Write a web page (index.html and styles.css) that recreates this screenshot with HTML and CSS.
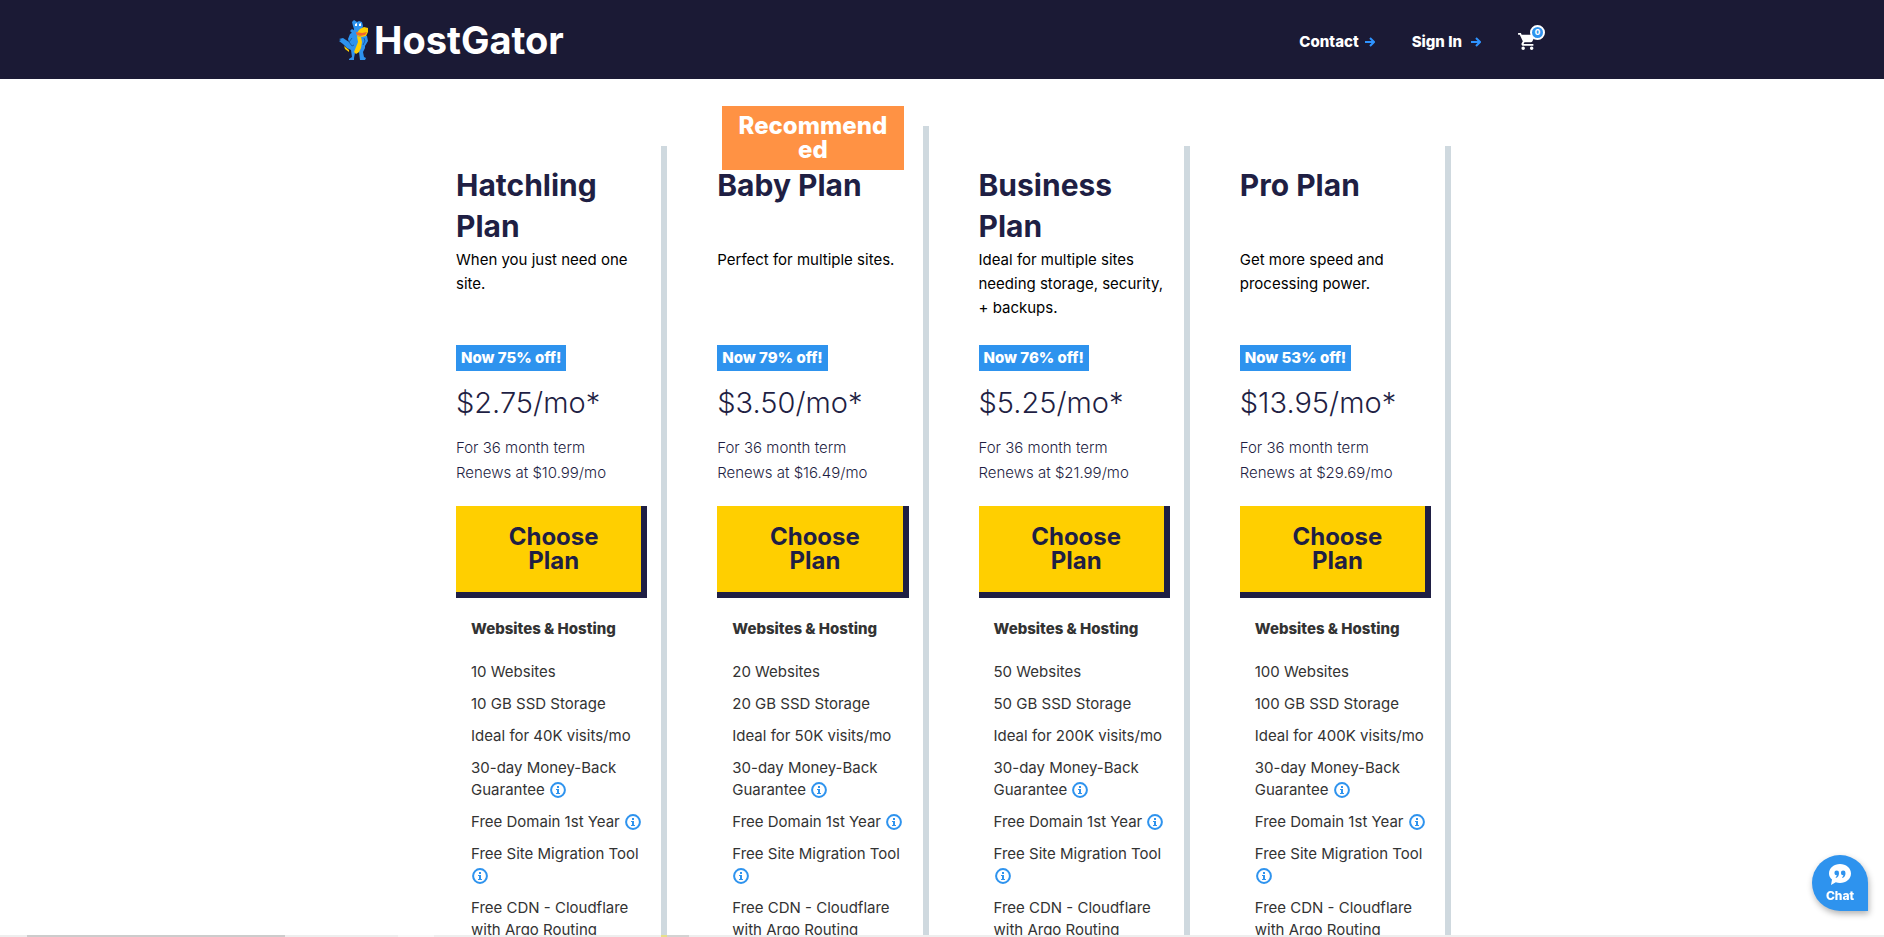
FILE: index.html
```html
<!DOCTYPE html>
<html lang="en">
<head>
  <meta charset="UTF-8">
  <title>HostGator - Web Hosting Plans</title>
  <meta name="viewport" content="width=device-width, initial-scale=1.0">
  <link rel="stylesheet" href="styles.css">
</head>
<body>

  <!-- Shared icons -->
  <svg class="sprite" aria-hidden="true">
    <symbol id="icon-info" viewBox="0 0 16 16">
      <circle cx="8" cy="8" r="6.9" fill="none" stroke="#2e93ee" stroke-width="2"/>
      <path d="M7 4h2v2H7zM6 7h3v4h1v1H6v-1h1V8H6z" fill="#2e93ee"/>
    </symbol>
    <symbol id="icon-arrow" viewBox="0 0 10 10">
      <path d="M0 5h9M5 1l4 4-4 4" fill="none" stroke="#2e93ff" stroke-width="2"/>
    </symbol>
  </svg>

  <!-- Header -->
  <header class="header">
    <div class="header-inner">
      <a class="logo" href="#">
        <svg class="gator" viewBox="0 0 29 40" aria-hidden="true">
          <path d="M13 2l2-2 3 2 2-1 3 1 1 4-1 4-3 5 4-1 4 2 1 5-3 5 0 2-2 4 1 5 2 1-1 2h-5l-1-8-4 1-1 5 0 3h-5l0-2 3-2-1-7-4-2-4-4-4-3 2-1-2-1 4-1 3 2 3 2-1-3 2-5 3-2 1-3-1-3z" fill="#2e93ee"/>
          <path d="M21 9l2-1 2-1 4 1v4l-2 4-4 1-4-1-2-2z" fill="#ffcf00"/>
          <path d="M13 10l4 2 6 1 5-1-2 3-5 1-5-2z" fill="#f4682c"/>
          <path d="M18 16l4 1 1 5-1 6-2 4-3 2-2-2 2-5 2-5z" fill="#ffcf00"/>
          <path d="M11 11l3 3 4 3-1-5-4-3z" fill="#2e93ee"/>
          <path d="M5 26l5 4 0 2-4-3z" fill="#ffcf00"/>
          <path d="M16 4l2-1 0 3-2 0zM20 4l2-1 0 3-2 0z" fill="#fff"/>
          <path d="M13 18l-3 4 3 4 2-1M25 18l1 3-2 4" fill="none" stroke="#195fa8" stroke-width="1"/>
        </svg>
        <span>HostGator</span>
      </a>
      <nav class="nav">
        <a class="nav-link" href="#">Contact <svg class="arrow"><use href="#icon-arrow"/></svg></a>
        <a class="nav-link sign-in" href="#">Sign In <svg class="arrow"><use href="#icon-arrow"/></svg></a>
        <a class="cart" href="#" aria-label="Cart">
          <svg class="cart-icon" viewBox="1 2 21 20"><path d="M7 18c-1.100 0-2 .9-2 2s.9 2 2 2 2-.9 2-2-.9-2-2-2zM1 2v2h2l3.600 7.600-1.400 2.400c-.7 1.300.3 3 1.800 3h12v-2H7.400l1.100-2h7.500c.7 0 1.400-.4 1.700-1L21.700 4H5.200l-.9-2H1zm16 16c-1.100 0-2 .9-2 2s.9 2 2 2 2-.9 2-2-.9-2-2-2z" fill="#fff"/></svg>
          <span class="cart-count">0</span>
        </a>
      </nav>
    </div>
  </header>

  <!-- Plans -->
  <main class="plans">
    <section class="plan">
      <h2>Hatchling Plan</h2>
      <p class="desc">When you just need one site.</p>
      <span class="discount">Now 75% off!</span>
      <p class="price">$2.75/mo*</p>
      <p class="term">For 36 month term<br>Renews at $10.99/mo</p>
      <button class="choose">Choose Plan</button>
      <h3>Websites &amp; Hosting</h3>
      <ul class="features">
        <li>10 Websites</li>
        <li>10 GB SSD Storage</li>
        <li>Ideal for 40K visits/mo</li>
        <li>30-day Money-Back Guarantee <svg class="info"><use href="#icon-info"/></svg></li>
        <li>Free Domain 1st Year <svg class="info"><use href="#icon-info"/></svg></li>
        <li>Free Site Migration Tool <svg class="info"><use href="#icon-info"/></svg></li>
        <li>Free CDN - Cloudflare with Argo Routing</li>
      </ul>
    </section>

    <section class="plan recommended">
      <div class="ribbon">Recommended</div>
      <h2>Baby Plan</h2>
      <p class="desc">Perfect for multiple sites.</p>
      <span class="discount">Now 79% off!</span>
      <p class="price">$3.50/mo*</p>
      <p class="term">For 36 month term<br>Renews at $16.49/mo</p>
      <button class="choose">Choose Plan</button>
      <h3>Websites &amp; Hosting</h3>
      <ul class="features">
        <li>20 Websites</li>
        <li>20 GB SSD Storage</li>
        <li>Ideal for 50K visits/mo</li>
        <li>30-day Money-Back Guarantee <svg class="info"><use href="#icon-info"/></svg></li>
        <li>Free Domain 1st Year <svg class="info"><use href="#icon-info"/></svg></li>
        <li>Free Site Migration Tool <svg class="info"><use href="#icon-info"/></svg></li>
        <li>Free CDN - Cloudflare with Argo Routing</li>
      </ul>
    </section>

    <section class="plan">
      <h2>Business Plan</h2>
      <p class="desc">Ideal for multiple sites needing storage, security, + backups.</p>
      <span class="discount">Now 76% off!</span>
      <p class="price">$5.25/mo*</p>
      <p class="term">For 36 month term<br>Renews at $21.99/mo</p>
      <button class="choose">Choose Plan</button>
      <h3>Websites &amp; Hosting</h3>
      <ul class="features">
        <li>50 Websites</li>
        <li>50 GB SSD Storage</li>
        <li>Ideal for 200K visits/mo</li>
        <li>30-day Money-Back Guarantee <svg class="info"><use href="#icon-info"/></svg></li>
        <li>Free Domain 1st Year <svg class="info"><use href="#icon-info"/></svg></li>
        <li>Free Site Migration Tool <svg class="info"><use href="#icon-info"/></svg></li>
        <li>Free CDN - Cloudflare with Argo Routing</li>
      </ul>
    </section>

    <section class="plan">
      <h2>Pro Plan</h2>
      <p class="desc">Get more speed and processing power.</p>
      <span class="discount">Now 53% off!</span>
      <p class="price">$13.95/mo*</p>
      <p class="term">For 36 month term<br>Renews at $29.69/mo</p>
      <button class="choose">Choose Plan</button>
      <h3>Websites &amp; Hosting</h3>
      <ul class="features">
        <li>100 Websites</li>
        <li>100 GB SSD Storage</li>
        <li>Ideal for 400K visits/mo</li>
        <li>30-day Money-Back Guarantee <svg class="info"><use href="#icon-info"/></svg></li>
        <li>Free Domain 1st Year <svg class="info"><use href="#icon-info"/></svg></li>
        <li>Free Site Migration Tool <svg class="info"><use href="#icon-info"/></svg></li>
        <li>Free CDN - Cloudflare with Argo Routing</li>
      </ul>
    </section>
  </main>

  <div class="bottom-bar"></div>

  <!-- Chat -->
  <button class="chat">
    <svg class="chat-icon" viewBox="0 0 22 21" aria-hidden="true">
      <path d="M11 0c6 0 11 4 11 9.500S17 19 11 19c-1.500 0-3-.3-4.200-.8L2 21l1-5.500C1 13.800 0 11.700 0 9.500 0 4 5 0 11 0z" fill="#fff"/>
      <path d="M10 9c0 2.500-1 4.200-3 5l-.4-.8c.8-.6 1.200-1.200 1.300-2A2.300 2.300 0 1 1 10 9zM16.500 9c0 2.500-1 4.200-3 5l-.4-.8c.8-.6 1.200-1.200 1.300-2A2.300 2.300 0 1 1 16.500 9z" fill="#2e93ee"/>
    </svg>
    Chat
  </button>

</body>
</html>
```
FILE: styles.css
```css
* {
  box-sizing: border-box;
}
body {
  margin: 0;
  height: 100vh;
  overflow: hidden;
  font-family: 'Inter', sans-serif;
  font-size: 16px;
  background-color: #fff;
  color: #1f1f44;
}
h2, h3, p, ul {
  margin: 0;
  padding: 0;
}
.sprite {
  display: none;
}

/* Header */
.header {
  background-color: #1b1a35;
}
.header-inner {
  display: flex;
  justify-content: space-between;
  align-items: center;
  max-width: 1206px;
  height: 79px;
  margin: 0 auto;
}
.logo {
  display: flex;
  align-items: center;
  gap: 6px;
  color: #fff;
  font-size: 38px;
  font-weight: 700;
  text-decoration: none;
}
.gator {
  width: 29px;
  height: 40px;
}
.nav {
  display: flex;
  align-items: center;
  gap: 37px;
  padding-top: 4px;
}
.nav-link {
  display: flex;
  align-items: center;
  gap: 6px;
  color: #fff;
  font-size: 15px;
  font-weight: 800;
  text-decoration: none;
}
.sign-in {
  gap: 9px;
}
.arrow {
  width: 10px;
  height: 10px;
}
.cart {
  position: relative;
  width: 27px;
  height: 18px;
}
.cart-icon {
  display: block;
  width: 18px;
  height: 17px;
}
.cart-count {
  position: absolute;
  top: -8px;
  right: 0;
  width: 15px;
  height: 15px;
  border: 2px solid #fff;
  border-radius: 50%;
  background-color: #2e93ee;
  color: #fff;
  font-size: 8px;
  font-weight: 800;
  line-height: 11px;
  text-align: center;
}

/* Plans */
.plans {
  display: grid;
  grid-template-columns: repeat(4, 1fr);
  max-width: 1072px;
  margin: 0 auto;
  padding: 47px 27px 0 0;
}
.plan {
  position: relative;
  margin-top: 20px;
  padding: 19px 14px 20px 50px;
  border-right: 6px solid #cfd9df;
}
.recommended {
  margin-top: 0;
  padding-top: 39px;
}
.ribbon {
  position: absolute;
  top: -20px;
  left: 55px;
  right: 19px;
  padding: 8px 12px;
  background-color: #ff9244;
  color: #fff;
  font-size: 24px;
  font-weight: 800;
  line-height: 24px;
  text-align: center;
  word-break: break-all;
}
.plan h2 {
  min-height: 83px;
  font-size: 30px;
  font-weight: 700;
  line-height: 41px;
}
.desc {
  min-height: 97px;
  color: #000;
  font-size: 15px;
  font-weight: 400;
  line-height: 24px;
}
.discount {
  display: inline-block;
  padding: 0 5px;
  background-color: #2e93ee;
  color: #fff;
  font-size: 15px;
  font-weight: 800;
  line-height: 26px;
}
.price {
  margin-top: 12px;
  font-size: 29px;
  font-weight: 300;
  line-height: 40px;
}
.term {
  margin-top: 12px;
  font-size: 15px;
  font-weight: 300;
  line-height: 25px;
}
.choose {
  width: 100%;
  margin-top: 21px;
  padding: 19px 30px 19px 40px;
  border: 0;
  border-right: 6px solid #1f1f44;
  border-bottom: 6px solid #1f1f44;
  background-color: #ffcf00;
  color: #1f1f44;
  font-family: inherit;
  font-size: 24px;
  font-weight: 700;
  line-height: 24px;
  cursor: pointer;
}
.plan h3 {
  margin: 20px 0 21px 15px;
  color: #333;
  font-size: 15px;
  font-weight: 800;
  line-height: 22px;
}
.features {
  margin-left: 15px;
  color: #333;
  font-size: 15px;
  font-weight: 400;
  line-height: 22px;
  list-style: none;
}
.features li {
  margin-bottom: 10px;
}
.info {
  width: 16px;
  height: 16px;
  margin: 0 1px;
  vertical-align: -3px;
}

/* Bottom edge */
.bottom-bar {
  position: fixed;
  left: 0;
  right: 0;
  bottom: 0;
  height: 2px;
  background: linear-gradient(to right, #eee 27px, #ccc 27px, #ccc 285px, #eee 285px, #eee 398px, #f8f8f8 398px, #f8f8f8 434px, #eee 434px, #eee 661px, #e6e08a 661px, #e6e08a 667px, #d3d3d3 667px, #d3d3d3 689px, #eee 689px);
}

/* Chat */
.chat {
  position: fixed;
  right: 16px;
  bottom: 26px;
  display: flex;
  flex-direction: column;
  align-items: center;
  justify-content: center;
  gap: 4px;
  width: 56px;
  height: 56px;
  padding: 0;
  border: 0;
  border-radius: 28px 28px 0 28px;
  background-color: #2e93ee;
  box-shadow: 1px 3px 6px rgba(0, 0, 0, 0.3);
  color: #fff;
  font-family: inherit;
  font-size: 12px;
  font-weight: 800;
  line-height: 14px;
  cursor: pointer;
}
.chat-icon {
  width: 22px;
  height: 21px;
}
```
